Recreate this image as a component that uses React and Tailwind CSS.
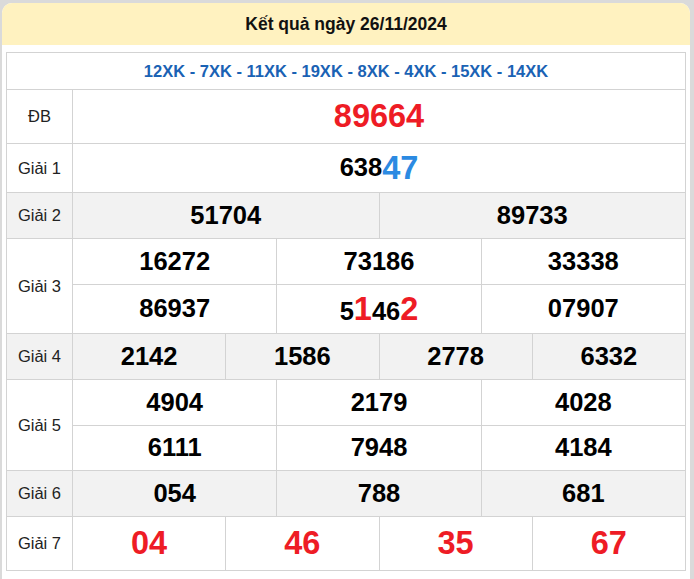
import React from 'react';

const RED = 'text-[#ee1c25]';

const Cell = ({ children, last, className = '' }) => (
  <div
    className={`flex-1 flex items-center justify-center ${last ? '' : 'border-r border-[#d3d3d3]'} ${className}`}
  >
    {children}
  </div>
);

const Num = ({ value, big, color = 'text-black' }) => (
  <span className={`font-bold leading-none ${big ? 'text-[32.5px]' : 'text-[25.5px]'} ${color}`}>{value}</span>
);

const Line = ({ items, h, border = true, render }) => (
  <div className={`flex ${h} ${border ? 'border-b border-[#d3d3d3]' : ''}`}>
    {items.map((it, i) => (
      <Cell key={i} last={i === items.length - 1}>
        {render ? render(it) : <Num value={it} />}
      </Cell>
    ))}
  </div>
);

const Row = ({ label, gray, children }) => (
  <div className={`flex border-b border-[#d3d3d3] ${gray ? 'bg-[#f2f2f2]' : 'bg-white'}`}>
    <div className="w-[66px] shrink-0 border-r border-[#d3d3d3] flex items-center justify-center text-[16.5px] text-[#222]">
      {label}
    </div>
    <div className="flex-1 flex flex-col">{children}</div>
  </div>
);

export default function App() {
  return (
    <div className="min-h-[579px] bg-[#dadada] pt-[3px] pl-[2px] pr-[4px]" style={{ fontFamily: '"Liberation Sans", Arial, sans-serif' }}>
      <div className="w-[688px] bg-white rounded-t-[10px] pb-[20px]">
        <div className="h-[42px] rounded-t-[10px] bg-[#fff2c0] flex items-center justify-center text-[17.5px] font-bold text-[#111]">
          Kết quả ngày 26/11/2024
        </div>
        <div className="pt-[7px] px-[4px]">
          <div className="w-[680px] border border-b-0 border-[#d3d3d3]">
            <div className="h-[37px] border-b border-[#d3d3d3] flex items-center justify-center text-[16.5px] font-bold text-[#1a62b4]">
              12XK - 7XK - 11XK - 19XK - 8XK - 4XK - 15XK - 14XK
            </div>

            <Row label="ĐB">
              <div className="h-[53px] flex items-center justify-center">
                <span className={`font-bold text-[32.5px] leading-none ${RED}`}>89664</span>
              </div>
            </Row>

            <Row label="Giải 1">
              <div className="h-[48px] flex items-center justify-center font-bold leading-none">
                <span className="text-[25.5px] text-black">638</span>
                <span className="text-[32.5px] text-[#2b8ae2]">47</span>
              </div>
            </Row>

            <Row label="Giải 2" gray>
              <Line items={['51704', '89733']} h="h-[45px]" border={false} />
            </Row>

            <Row label="Giải 3">
              <Line items={['16272', '73186', '33338']} h="h-[46px]" />
              <Line
                items={['86937', 'special', '07907']}
                h="h-[48px]"
                border={false}
                render={(it) =>
                  it === 'special' ? (
                    <span className="font-bold leading-none text-black text-[25.5px]">
                      5<span className={`text-[32.5px] ${RED}`}>1</span>46<span className={`text-[32.5px] ${RED}`}>2</span>
                    </span>
                  ) : (
                    <Num value={it} />
                  )
                }
              />
            </Row>

            <Row label="Giải 4" gray>
              <Line items={['2142', '1586', '2778', '6332']} h="h-[45px]" border={false} />
            </Row>

            <Row label="Giải 5">
              <Line items={['4904', '2179', '4028']} h="h-[46px]" />
              <Line items={['6111', '7948', '4184']} h="h-[44px]" border={false} />
            </Row>

            <Row label="Giải 6" gray>
              <Line items={['054', '788', '681']} h="h-[45px]" border={false} />
            </Row>

            <Row label="Giải 7">
              <Line
                items={['04', '46', '35', '67']}
                h="h-[53px]"
                border={false}
                render={(it) => <Num value={it} big color={RED} />}
              />
            </Row>
          </div>
        </div>
      </div>
    </div>
  );
}
